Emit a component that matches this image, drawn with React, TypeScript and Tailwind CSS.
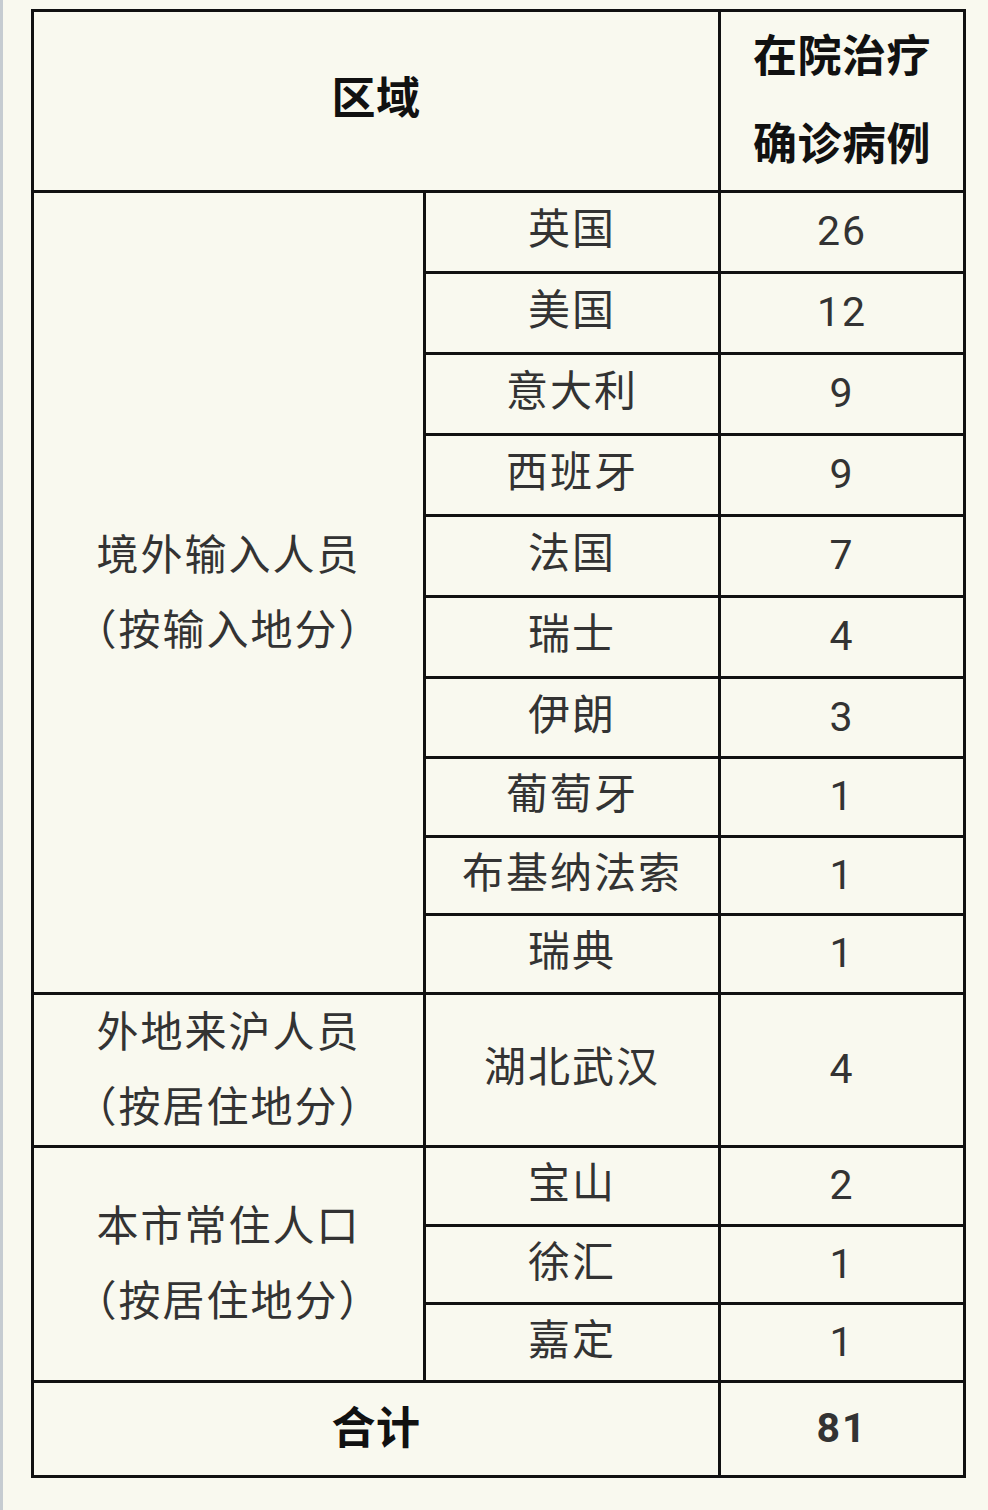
import React from "react";

type Row = { name: string; count: number; h: number };

const groups: { label: string[]; rows: Row[] }[] = [
  {
    label: ["境外输入人员", "（按输入地分）"],
    rows: [
      { name: "英国", count: 26, h: 81 },
      { name: "美国", count: 12, h: 81 },
      { name: "意大利", count: 9, h: 81 },
      { name: "西班牙", count: 9, h: 81 },
      { name: "法国", count: 7, h: 81 },
      { name: "瑞士", count: 4, h: 81 },
      { name: "伊朗", count: 3, h: 80 },
      { name: "葡萄牙", count: 1, h: 79 },
      { name: "布基纳法索", count: 1, h: 78 },
      { name: "瑞典", count: 1, h: 79 },
    ],
  },
  {
    label: ["外地来沪人员", "（按居住地分）"],
    rows: [{ name: "湖北武汉", count: 4, h: 153 }],
  },
  {
    label: ["本市常住人口", "（按居住地分）"],
    rows: [
      { name: "宝山", count: 2, h: 79 },
      { name: "徐汇", count: 1, h: 78 },
      { name: "嘉定", count: 1, h: 78 },
    ],
  },
];

const cell = "border-[3px] border-[#111] text-center align-middle p-0";
const bold = "font-bold text-[44px] text-[#111] tracking-[0.5px]";

export default function App() {
  return (
    <div
      className="min-h-[1510px] w-[988px] bg-[#f9f9ef] border-l-[3px] border-[#c6ccd1] pt-[9px] pl-[28px]"
      style={{ fontFamily: 'Roboto, "Noto Sans CJK SC", sans-serif' }}
    >
      <table className="border-collapse table-fixed w-[932px] text-[42px] text-[#333] tracking-[2px]">
        <colgroup>
          <col className="w-[392px]" />
          <col className="w-[295px]" />
          <col className="w-[245px]" />
        </colgroup>
        <tbody>
          <tr className="h-[181px]">
            <th colSpan={2} className={`${cell} ${bold} pb-[5px]`}>
              区域
            </th>
            <th className={`${cell} ${bold} leading-[88px]`}>
              在院治疗
              <br />
              确诊病例
            </th>
          </tr>
          {groups.map((g) =>
            g.rows.map((r, i) => (
              <tr key={g.label[0] + r.name} style={{ height: r.h }}>
                {i === 0 && (
                  <td rowSpan={g.rows.length} className={`${cell} leading-[75px]`}>
                    {g.label[0]}
                    <br />
                    {g.label[1]}
                  </td>
                )}
                <td className={`${cell} pb-[5px]`}>{r.name}</td>
                <td className={`${cell} text-[41px]`}>{r.count}</td>
              </tr>
            ))
          )}
          <tr className="h-[95px]">
            <td colSpan={2} className={`${cell} ${bold}`}>
              合计
            </td>
            <td className={`${cell} font-bold text-[41px]`}>81</td>
          </tr>
        </tbody>
      </table>
    </div>
  );
}
